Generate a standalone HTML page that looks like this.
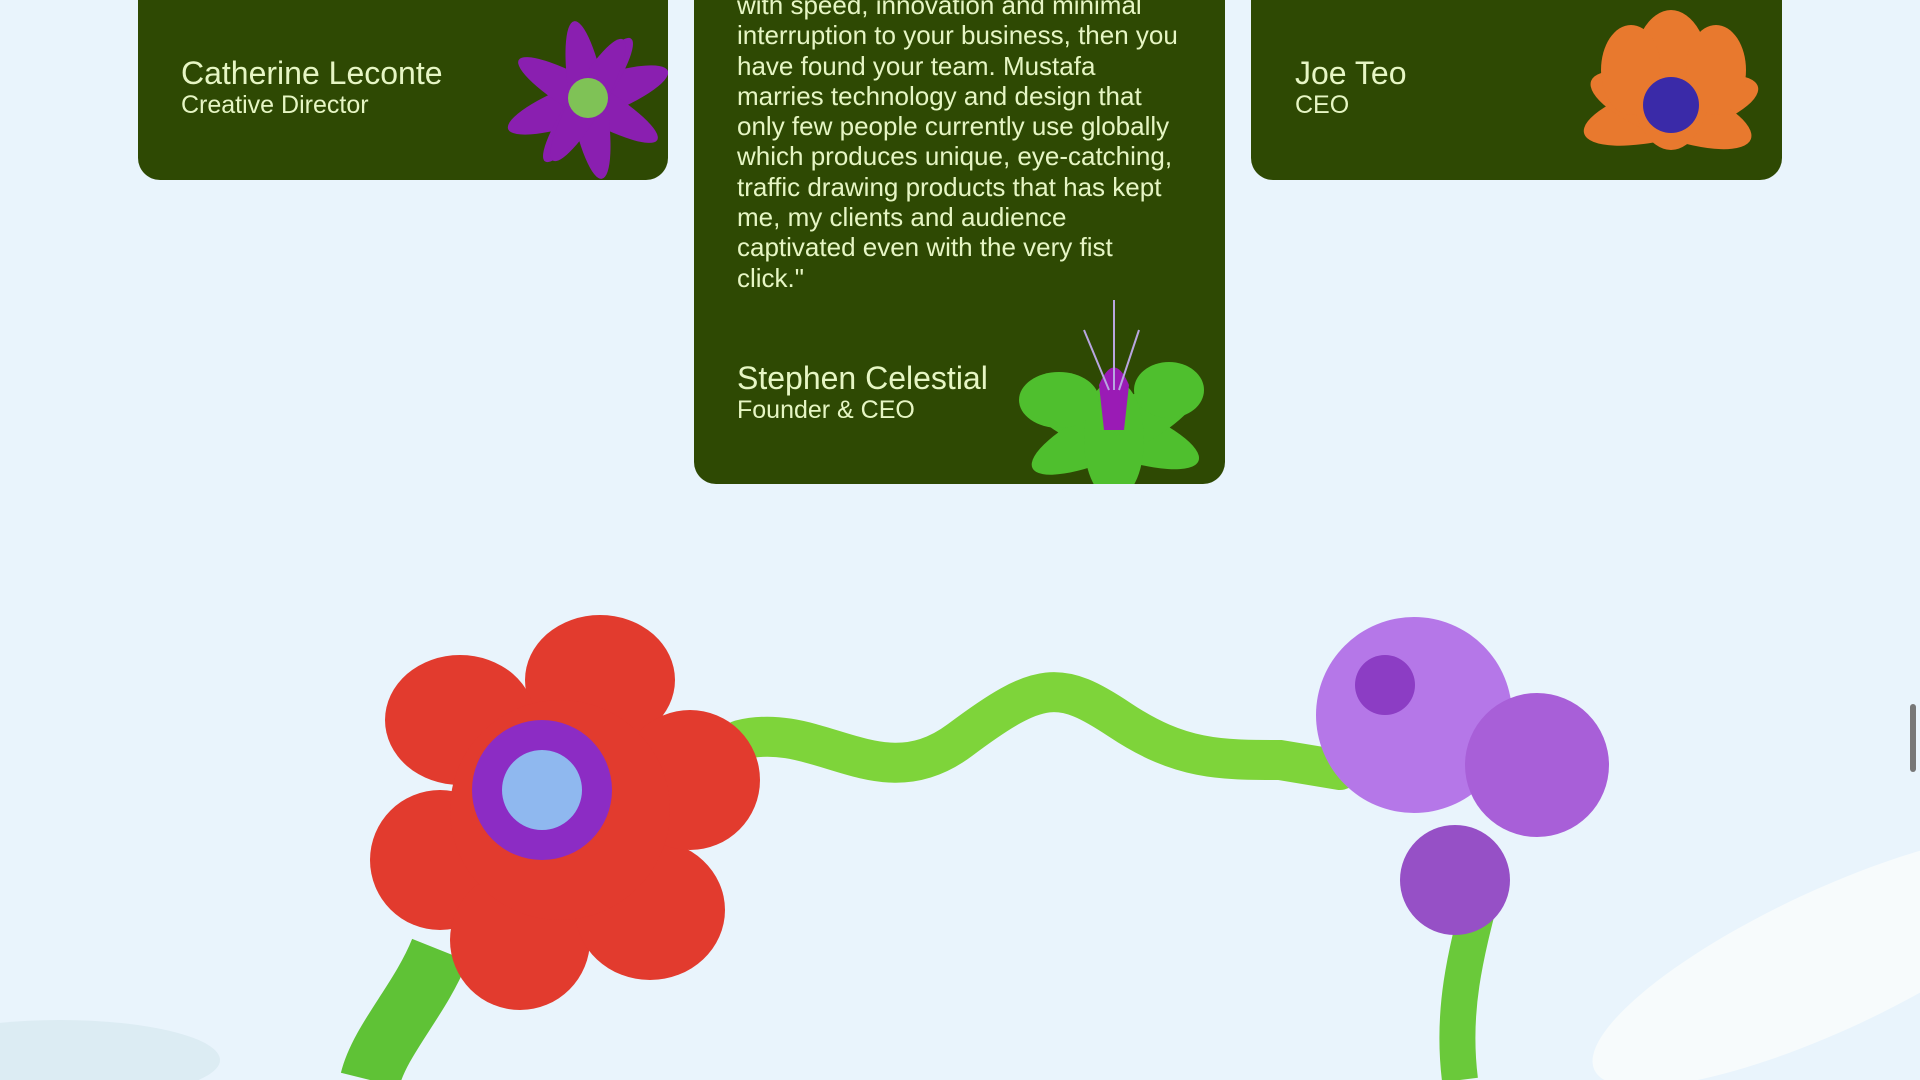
<!DOCTYPE html>
<html><head><meta charset="utf-8">
<style>
html,body{margin:0;padding:0;width:1920px;height:1080px;overflow:hidden;background:#e9f4fc;font-family:"Liberation Sans",sans-serif;}
.card{position:absolute;background:#2e4903;border-radius:0 0 22px 22px;overflow:hidden;color:#e6f6c4;}
.name{position:absolute;font-size:32px;line-height:36px;white-space:nowrap;}
.role{position:absolute;font-size:25px;line-height:28px;white-space:nowrap;}
.quote{position:absolute;left:43px;top:-10px;white-space:nowrap;font-size:26px;line-height:30.3px;}
svg{position:absolute;}
</style></head><body>

<div class="card" style="left:138px;top:0;width:530px;height:180px;">
  <div class="name" style="left:43px;top:55px;">Catherine Leconte</div>
  <div class="role" style="left:43px;top:91px;">Creative Director</div>
  <svg width="240" height="180" style="left:300px;top:0" viewBox="0 0 240 180">
    <g fill="#8a1fb0">
      <ellipse cx="150" cy="100" rx="85" ry="20" transform="rotate(-20 150 100)"/>
      <ellipse cx="150" cy="100" rx="80" ry="18" transform="rotate(30 150 100)"/>
      <ellipse cx="150" cy="100" rx="80" ry="18" transform="rotate(80 150 100)"/>
      <ellipse cx="150" cy="100" rx="75" ry="16" transform="rotate(125 150 100)"/>
      <ellipse cx="150" cy="100" rx="70" ry="16" transform="rotate(-60 150 100)"/>
    </g>
    <circle cx="150" cy="98" r="20" fill="#7fc256"/>
  </svg>
</div>

<div class="card" style="left:694px;top:0;width:531px;height:484px;">
  <div class="quote">with speed, innovation and minimal<br>interruption to your business, then you<br>have found your team. Mustafa<br>marries technology and design that<br>only few people currently use globally<br>which produces unique, eye-catching,<br>traffic drawing products that has kept<br>me, my clients and audience<br>captivated even with the very fist<br>click."</div>
  <div class="name" style="left:43px;top:360px;">Stephen Celestial</div>
  <div class="role" style="left:43px;top:396px;">Founder &amp; CEO</div>
  <svg width="230" height="200" style="left:305px;top:290px" viewBox="0 0 230 200">
    <g fill="#4fbf2e">
      <ellipse cx="115" cy="140" rx="90" ry="26" transform="rotate(20 115 140)"/>
      <ellipse cx="115" cy="140" rx="90" ry="26" transform="rotate(-25 115 140)"/>
      <ellipse cx="115" cy="150" rx="30" ry="60"/>
      <ellipse cx="60" cy="110" rx="40" ry="28"/>
      <ellipse cx="170" cy="100" rx="35" ry="28"/>
    </g>
    <path d="M100 95 Q115 60 130 95 L125 140 L105 140Z" fill="#9a1bb5"/>
    <g stroke="#b8a6e0" stroke-width="2"><line x1="115" y1="100" x2="115" y2="10"/><line x1="110" y1="100" x2="85" y2="40"/><line x1="120" y1="100" x2="140" y2="40"/></g>
  </svg>
</div>

<div class="card" style="left:1251px;top:0;width:531px;height:180px;">
  <div class="name" style="left:44px;top:55px;">Joe Teo</div>
  <div class="role" style="left:44px;top:91px;">CEO</div>
  <svg width="240" height="180" style="left:300px;top:0" viewBox="0 0 240 180">
    <g fill="#e8792e">
      <ellipse cx="120" cy="110" rx="90" ry="28" transform="rotate(-15 120 110)"/>
      <ellipse cx="120" cy="110" rx="85" ry="28" transform="rotate(20 120 110)"/>
      <ellipse cx="120" cy="80" rx="40" ry="70"/>
      <ellipse cx="80" cy="70" rx="30" ry="45"/>
      <ellipse cx="165" cy="70" rx="30" ry="45"/>
    </g>
    <circle cx="120" cy="105" r="28" fill="#3a2aa8"/>
  </svg>
</div>

<svg width="1920" height="560" style="left:0;top:520px" viewBox="0 520 1920 560">
  <ellipse cx="1830" cy="960" rx="260" ry="70" fill="#f7fbfc" transform="rotate(-25 1830 960)"/>
  <ellipse cx="60" cy="1060" rx="160" ry="40" fill="#dcecf3"/>
  <path d="M740 740 C820 720 880 800 960 740 S1060 680 1120 720 S1220 760 1280 760 L1340 770" stroke="#7ed43a" stroke-width="40" fill="none" stroke-linecap="round"/>
  <path d="M1490 860 C1470 940 1450 1000 1460 1080" stroke="#6ac93a" stroke-width="36" fill="none"/>
  <path d="M440 950 C420 1000 380 1040 370 1080" stroke="#5fc236" stroke-width="60" fill="none"/>
  <g fill="#e23b2e">
    <ellipse cx="600" cy="680" rx="75" ry="65"/>
    <ellipse cx="460" cy="720" rx="75" ry="65"/>
    <ellipse cx="440" cy="860" rx="70" ry="70"/>
    <ellipse cx="520" cy="940" rx="70" ry="70"/>
    <ellipse cx="650" cy="910" rx="75" ry="70"/>
    <ellipse cx="690" cy="780" rx="70" ry="70"/>
    <circle cx="560" cy="810" r="110"/>
  </g>
  <circle cx="542" cy="790" r="70" fill="#8c2cc4"/>
  <circle cx="542" cy="790" r="40" fill="#8fb8ef"/>
  <circle cx="1414" cy="715" r="98" fill="#b577e8"/>
  <circle cx="1385" cy="685" r="30" fill="#8c3dc4"/>
  <circle cx="1537" cy="765" r="72" fill="#a85fd8"/>
  <circle cx="1455" cy="880" r="55" fill="#9650c6"/>
</svg>

<div style="position:absolute;left:1910px;top:704px;width:6px;height:68px;background:#777;border-radius:3px;"></div>
</body></html>
